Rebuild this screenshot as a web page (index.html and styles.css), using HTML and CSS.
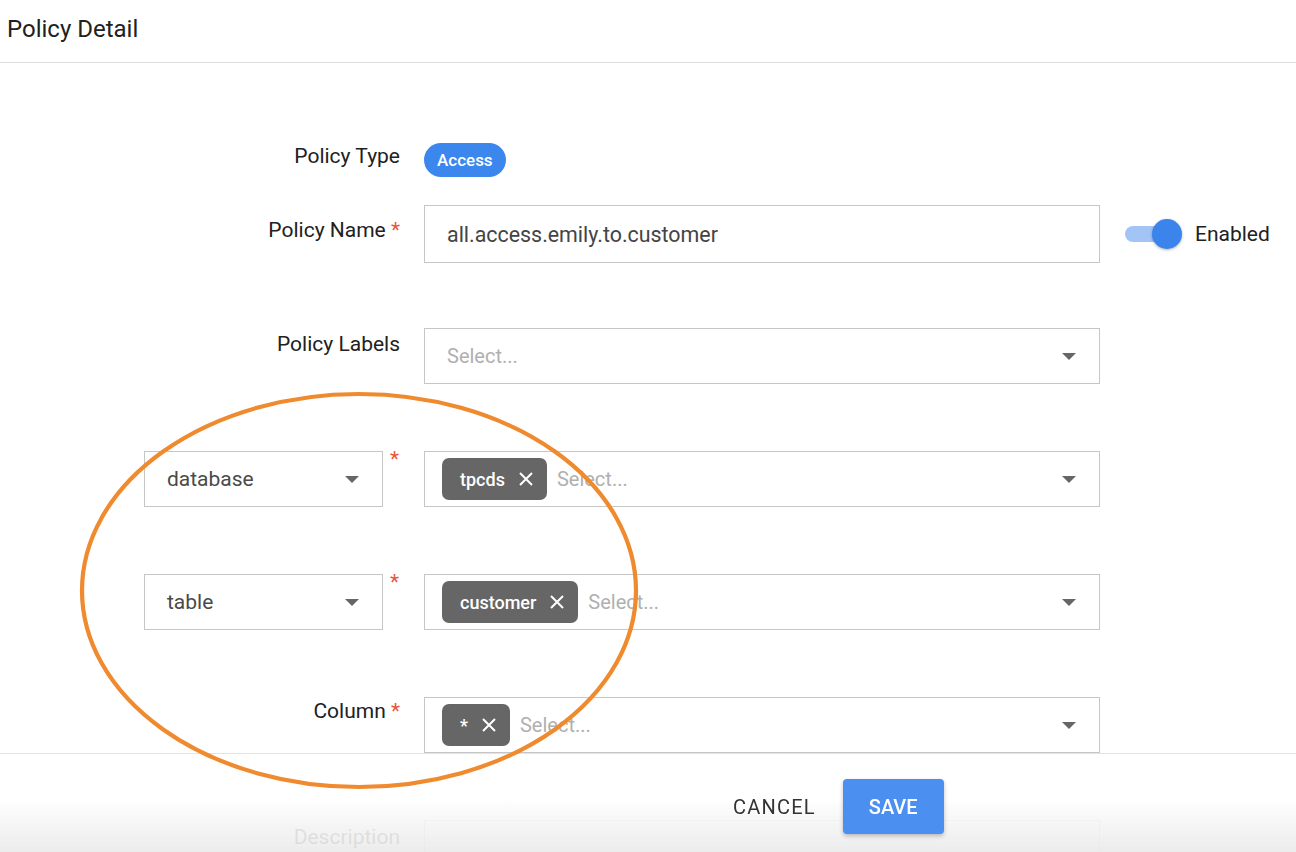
FILE: index.html
```html
<!DOCTYPE html>
<html lang="en">
<head>
<meta charset="utf-8">
<title>Policy Detail</title>
<link rel="stylesheet" href="styles.css">
</head>
<body>
<header class="topbar"><h1>Policy Detail</h1></header>

<main class="form">
  <div class="row row-type">
    <div class="label">Policy Type</div>
    <div class="field"><span class="badge">Access</span></div>
  </div>

  <div class="row row-name">
    <div class="label label-name">Policy Name <span class="req">*</span></div>
    <div class="input">all.access.emily.to.customer</div>
    <div class="extra">
      <span class="toggle"><span class="knob"></span></span>
      <span class="toggle-text">Enabled</span>
    </div>
  </div>

  <div class="row row-labels">
    <div class="label">Policy Labels</div>
    <div class="select">
      <span class="placeholder">Select...</span>
      <span class="caret"></span>
    </div>
  </div>

  <div class="row">
    <div class="label label-select">
      <div class="select select-small"><span class="value">database</span><span class="caret"></span></div>
      <span class="req req-top">*</span>
    </div>
    <div class="select">
      <span class="chip">tpcds<svg class="x" viewBox="0 0 14 14"><path d="M1 1L13 13M13 1L1 13"/></svg></span>
      <span class="placeholder">Select...</span>
      <span class="caret"></span>
    </div>
  </div>

  <div class="row">
    <div class="label label-select">
      <div class="select select-small"><span class="value">table</span><span class="caret"></span></div>
      <span class="req req-top">*</span>
    </div>
    <div class="select">
      <span class="chip">customer<svg class="x" viewBox="0 0 14 14"><path d="M1 1L13 13M13 1L1 13"/></svg></span>
      <span class="placeholder">Select...</span>
      <span class="caret"></span>
    </div>
  </div>

  <div class="row">
    <div class="label">Column <span class="req">*</span></div>
    <div class="select">
      <span class="chip">*<svg class="x" viewBox="0 0 14 14"><path d="M1 1L13 13M13 1L1 13"/></svg></span>
      <span class="placeholder">Select...</span>
      <span class="caret"></span>
    </div>
  </div>

  <div class="row row-last">
    <div class="label label-desc">Description</div>
    <div class="textarea"></div>
  </div>
</main>

<footer class="actions">
  <button class="btn btn-cancel">CANCEL</button>
  <button class="btn btn-save">SAVE</button>
</footer>

<svg class="annotation" width="1296" height="852" viewBox="0 0 1296 852">
  <ellipse cx="359" cy="590.5" rx="277" ry="196.5" fill="none" stroke="#ef8a2e" stroke-width="4.2"/>
</svg>
</body>
</html>
```

FILE: styles.css
```css
* { box-sizing: border-box; }

html, body {
  margin: 0;
  height: 100%;
}

body {
  font-family: Roboto, "Noto Sans", sans-serif;
  color: #212121;
  background: #fff;
  overflow: hidden;
}

.topbar {
  height: 63px;
  border-bottom: 1px solid #dcdcdc;
  padding: 15px 7px 0;
}

.topbar h1 {
  margin: 0;
  font-size: 24px;
  line-height: 28px;
  font-weight: 400;
  color: #212121;
}

.form {
  padding-top: 80px;
}

.row {
  display: grid;
  grid-template-columns: 400px 676px auto;
  column-gap: 24px;
  align-items: start;
  margin-bottom: 67px;
}

.row-type { margin-bottom: 28px; }
.row-name { margin-bottom: 65px; align-items: center; }
.row-last { margin-bottom: 0; }

.label {
  text-align: right;
  font-size: 21px;
  line-height: 24px;
  padding-top: 2px;
  color: #212121;
}

.row-type .label { padding-top: 1px; }
.row-name .label { align-self: start; padding-top: 13px; }
.row-labels .label { padding-top: 4px; }
.label-desc { padding-top: 5px; }

.req {
  color: #e8553b;
}

.label-select {
  display: flex;
  justify-content: flex-end;
  align-items: flex-start;
  gap: 7px;
  padding-top: 0;
  text-align: left;
}

.req-top {
  line-height: 16px;
  padding-right: 1px;
}

.badge {
  display: inline-flex;
  align-items: center;
  height: 34px;
  padding: 0 13px;
  border-radius: 17px;
  background: #3b87ee;
  color: #fff;
  font-size: 17px;
  font-weight: 500;
}

.input {
  height: 58px;
  border: 1px solid #c6c6c6;
  display: flex;
  align-items: center;
  padding-left: 22px;
  font-size: 21.4px;
  color: #444;
}

.extra {
  display: flex;
  align-items: center;
  padding-left: 1px;
}

.toggle {
  position: relative;
  width: 56px;
  height: 16px;
  border-radius: 8px;
  background: #a3c5f6;
  margin-right: 14px;
}

.knob {
  position: absolute;
  right: -1px;
  top: -7px;
  width: 30px;
  height: 30px;
  border-radius: 50%;
  background: #3a84ec;
  box-shadow: 0 1px 3px rgba(0, 0, 0, 0.3);
}

.toggle-text {
  font-size: 21px;
  color: #212121;
}

.select {
  height: 56px;
  border: 1px solid #c6c6c6;
  display: flex;
  align-items: center;
  padding: 0 23px 0 17px;
  gap: 10px;
  font-size: 21px;
}

.select-small {
  width: 239px;
  padding-left: 22px;
  flex: none;
  text-align: left;
}

.value {
  color: #4a4a4a;
  flex: 1;
}

.placeholder {
  color: #b0b0b0;
  flex: 1;
  font-size: 20px;
}

.select > .placeholder:first-child {
  padding-left: 5px;
}

.caret {
  width: 0;
  height: 0;
  border-left: 7px solid transparent;
  border-right: 7px solid transparent;
  border-top: 7px solid #666;
  flex: none;
}

.chip {
  display: inline-flex;
  align-items: center;
  height: 42px;
  padding: 0 14px 0 18px;
  gap: 14px;
  border-radius: 7px;
  background: #666;
  color: #fff;
  font-size: 18px;
  font-weight: 500;
  flex: none;
}

.x {
  width: 14px;
  height: 14px;
  stroke: #fff;
  stroke-width: 2;
  fill: none;
}

.textarea {
  height: 32px;
  border: 1px solid #c6c6c6;
  border-bottom: none;
}

.actions {
  position: fixed;
  left: 0;
  right: 0;
  bottom: 0;
  height: 99px;
  border-top: 1px solid #e3e3e3;
  background: linear-gradient(to bottom, rgba(255, 255, 255, 0.9) 0%, rgba(255, 255, 255, 0.9) 45%, rgba(234, 234, 234, 0.92) 100%);
  display: flex;
  align-items: flex-start;
  padding: 25px 0 0 718px;
  gap: 12px;
}

.btn {
  font-family: Roboto, "Noto Sans", sans-serif;
  font-size: 20px;
  height: 55px;
  border: none;
  border-radius: 4px;
  cursor: pointer;
}

.btn-cancel {
  background: transparent;
  color: #333;
  padding: 0 15px;
  letter-spacing: 1.2px;
}

.btn-save {
  width: 101px;
  background: #4b8ff0;
  color: #fff;
  font-weight: 500;
  box-shadow: 0 2px 4px rgba(0, 0, 0, 0.25);
}

.annotation {
  position: absolute;
  top: 0;
  left: 0;
  pointer-events: none;
}
```
